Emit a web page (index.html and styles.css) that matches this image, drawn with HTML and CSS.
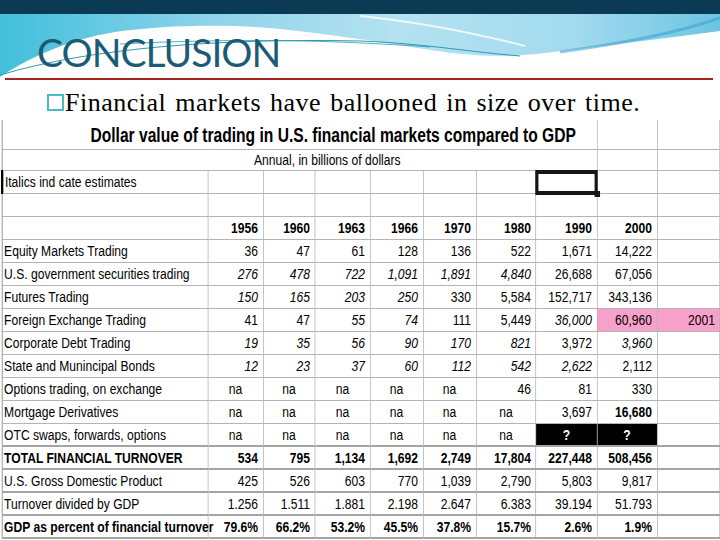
FILE: index.html
```html
<!DOCTYPE html>
<html>
<head>
<meta charset="utf-8">
<link rel="stylesheet" href="styles.css">
</head>
<body>
<div class="slide">
  <header class="header">
    <svg class="swoosh" width="720" height="78" viewBox="0 0 720 78">
      <defs>
        <linearGradient id="sky" x1="0" y1="0" x2="1" y2="0">
          <stop offset="0" stop-color="#42bfdb"/>
          <stop offset="0.3" stop-color="#8fd4ea"/>
          <stop offset="0.55" stop-color="#b4e2f1"/>
          <stop offset="0.8" stop-color="#a2daee"/>
          <stop offset="1" stop-color="#6cc5e2"/>
        </linearGradient>
      </defs>
      <rect width="720" height="78" fill="url(#sky)"/>
      <path d="M0,77 C25,60 65,40 115,32 C165,25 220,24 270,28 C330,34 380,42 430,50 C470,56 505,58 545,53 C605,46 665,38 720,31 L720,78 L0,78 Z" fill="#ffffff"/>
      <path d="M360,16 C420,22 470,32 525,46" stroke="#ffffff" stroke-width="2" fill="none" opacity="0.8"/>
      <path d="M560,52 C620,44 680,32 720,18" stroke="#3a9fcc" stroke-width="3" fill="none" opacity="0.55"/>
      <path d="M0,75 C90,48 220,38 360,41 C420,43 470,52 520,56" stroke="#2e9bb3" stroke-width="1" fill="none"/>
      <path d="M120,44 C240,38 330,40 430,47" stroke="#2e9bb3" stroke-width="0.8" fill="none"/>
      <rect width="720" height="14" fill="#0b3a55"/>
    </svg>
    <h1 class="title">CONCLUSION</h1>
  </header>
  <div class="rule"></div>
  <p class="bullet"><span class="box"></span>Financial markets have ballooned in size over time.</p>
  <div class="sheet-wrap">
  <table class="sheet">
    <colgroup>
      <col class="c-label"><col class="c55"><col class="c52"><col class="c55"><col class="c53"><col class="c54"><col class="c60"><col class="c61"><col class="c60"><col class="c62">
    </colgroup>
    <tr class="r-title">
      <td colspan="8" class="ttl">Dollar value of trading in U.S. financial markets compared to GDP</td>
      <td></td><td></td>
    </tr>
    <tr class="r-sub">
      <td colspan="8" class="sub">Annual, in billions of dollars</td>
      <td></td><td></td>
    </tr>
    <tr>
      <td class="lbl mark">Italics ind cate estimates</td>
      <td></td><td></td><td></td><td></td><td></td><td></td><td class="sel"><span class="handle"></span></td><td></td><td></td>
    </tr>
    <tr>
      <td></td><td></td><td></td><td></td><td></td><td></td><td></td><td></td><td></td><td></td>
    </tr>
    <tr class="b">
      <td></td><td class="n">1956</td><td class="n">1960</td><td class="n">1963</td><td class="n">1966</td><td class="n">1970</td><td class="n">1980</td><td class="n">1990</td><td class="n">2000</td><td></td>
    </tr>
    <tr>
      <td class="lbl">Equity Markets Trading</td><td class="n">36</td><td class="n">47</td><td class="n">61</td><td class="n">128</td><td class="n">136</td><td class="n">522</td><td class="n">1,671</td><td class="n">14,222</td><td></td>
    </tr>
    <tr>
      <td class="lbl">U.S. government securities trading</td><td class="n i">276</td><td class="n i">478</td><td class="n i">722</td><td class="n i">1,091</td><td class="n i">1,891</td><td class="n i">4,840</td><td class="n">26,688</td><td class="n">67,056</td><td></td>
    </tr>
    <tr>
      <td class="lbl">Futures Trading</td><td class="n i">150</td><td class="n i">165</td><td class="n i">203</td><td class="n i">250</td><td class="n">330</td><td class="n">5,584</td><td class="n">152,717</td><td class="n">343,136</td><td></td>
    </tr>
    <tr>
      <td class="lbl">Foreign Exchange Trading</td><td class="n">41</td><td class="n">47</td><td class="n i">55</td><td class="n i">74</td><td class="n">111</td><td class="n">5,449</td><td class="n i">36,000</td><td class="n pink">60,960</td><td class="n pink">2001</td>
    </tr>
    <tr>
      <td class="lbl">Corporate Debt Trading</td><td class="n i">19</td><td class="n i">35</td><td class="n i">56</td><td class="n i">90</td><td class="n i">170</td><td class="n i">821</td><td class="n">3,972</td><td class="n i">3,960</td><td></td>
    </tr>
    <tr>
      <td class="lbl">State and Munincipal Bonds</td><td class="n i">12</td><td class="n i">23</td><td class="n i">37</td><td class="n i">60</td><td class="n i">112</td><td class="n i">542</td><td class="n i">2,622</td><td class="n">2,112</td><td></td>
    </tr>
    <tr>
      <td class="lbl">Options trading, on exchange</td><td class="c">na</td><td class="c">na</td><td class="c">na</td><td class="c">na</td><td class="c">na</td><td class="n">46</td><td class="n">81</td><td class="n">330</td><td></td>
    </tr>
    <tr>
      <td class="lbl">Mortgage Derivatives</td><td class="c">na</td><td class="c">na</td><td class="c">na</td><td class="c">na</td><td class="c">na</td><td class="c">na</td><td class="n">3,697</td><td class="n bold">16,680</td><td></td>
    </tr>
    <tr class="thick">
      <td class="lbl">OTC swaps, forwards, options</td><td class="c">na</td><td class="c">na</td><td class="c">na</td><td class="c">na</td><td class="c">na</td><td class="c">na</td><td class="c blk">?</td><td class="c blk">?</td><td></td>
    </tr>
    <tr class="thick b">
      <td class="lbl">TOTAL FINANCIAL TURNOVER</td><td class="n">534</td><td class="n">795</td><td class="n">1,134</td><td class="n">1,692</td><td class="n">2,749</td><td class="n">17,804</td><td class="n">227,448</td><td class="n">508,456</td><td></td>
    </tr>
    <tr class="thick">
      <td class="lbl">U.S. Gross Domestic Product</td><td class="n">425</td><td class="n">526</td><td class="n">603</td><td class="n">770</td><td class="n">1,039</td><td class="n">2,790</td><td class="n">5,803</td><td class="n">9,817</td><td></td>
    </tr>
    <tr class="thick">
      <td class="lbl">Turnover divided by GDP</td><td class="n">1.256</td><td class="n">1.511</td><td class="n">1.881</td><td class="n">2.198</td><td class="n">2.647</td><td class="n">6.383</td><td class="n">39.194</td><td class="n">51.793</td><td></td>
    </tr>
    <tr class="thick b">
      <td class="lbl">GDP as percent of financial turnover</td><td class="n">79.6%</td><td class="n">66.2%</td><td class="n">53.2%</td><td class="n">45.5%</td><td class="n">37.8%</td><td class="n">15.7%</td><td class="n">2.6%</td><td class="n">1.9%</td><td></td>
    </tr>
  </table>
  </div>
</div>
</body>
</html>
```
FILE: styles.css
```css
html, body {
  margin: 0;
  padding: 0;
  background: #ffffff;
}
.slide {
  width: 720px;
  height: 540px;
  overflow: hidden;
  position: relative;
  background: #ffffff;
}
.header {
  position: relative;
  height: 77px;
}
.swoosh {
  position: absolute;
  left: 0;
  top: 0;
  display: block;
}
.title {
  position: relative;
  margin: 0;
  padding: 30px 0 0 37px;
  font-family: Lato, "Open Sans", sans-serif;
  font-weight: 400;
  font-size: 39px;
  line-height: 44px;
  color: #1b5c74;
  letter-spacing: -1px;
}
.rule {
  margin-left: 5px;
  width: 708px;
  height: 3px;
  background: #a3261d;
}
.bullet {
  margin: 0;
  height: 38px;
  padding-left: 47px;
  font-family: "Liberation Serif", "Times New Roman", serif;
  font-size: 26px;
  line-height: 46px;
  letter-spacing: 0.5px;
  word-spacing: 2px;
  color: #000000;
  white-space: nowrap;
  overflow: hidden;
}
.box {
  display: inline-block;
  width: 13px;
  height: 13px;
  border: 2px solid #47b9c7;
  margin-right: 1px;
  vertical-align: 0;
}
.sheet-wrap {
  width: 719px;
  margin-left: 1px;
  margin-top: 2px;
}
.sheet {
  border-collapse: collapse;
  table-layout: fixed;
  width: 920px;
  transform: scaleX(0.78);
  transform-origin: 0 0;
  font-family: "Liberation Sans", Arial, sans-serif;
  font-size: 15.5px;
  color: #000000;
}
.sheet td {
  border: 1px solid #b4b4b4;
  height: 22px;
  padding: 0 6px 0 2px;
  white-space: nowrap;
  overflow: visible;
  line-height: 22px;
}
.sheet td:first-child {
  border-left: 1px solid #7a7a7a;
}
.c-label { width: 264px; }
.c55 { width: 70.5px; }
.c52 { width: 66.7px; }
.c53 { width: 67.9px; }
.c54 { width: 68px; }
.c60 { width: 76.9px; }
.c61 { width: 78.2px; }
.c62 { width: 80.8px; }
.r-title td {
  height: 29px;
  border-top: none;
}
.ttl {
  font-weight: 700;
  font-size: 20px;
  text-align: center;
  padding-left: 92px !important;
}
.r-sub td {
  height: 20px;
  line-height: 20px;
}
.sub {
  text-align: center;
  padding-left: 77px !important;
}
.lbl {
  text-align: left;
}
.mark {
  border-left: 3px solid #000000 !important;
}
.n { text-align: right; }
.c { text-align: center; padding: 0 !important; }
.i { font-style: italic; }
.b td, .bold { font-weight: 700; }
.pink { background: #f7a0c9; }
.blk {
  background: #000000;
  color: #ffffff;
  font-weight: 700;
}
.sel {
  position: relative;
  outline: 4px solid #151515;
  outline-offset: -3px;
}
.handle {
  position: absolute;
  right: -4px;
  bottom: -4px;
  width: 7px;
  height: 6px;
  background: #151515;
}
.thick td {
  height: 21px;
  line-height: 21px;
  border-bottom: 2px solid #a4a4a4;
}
```
